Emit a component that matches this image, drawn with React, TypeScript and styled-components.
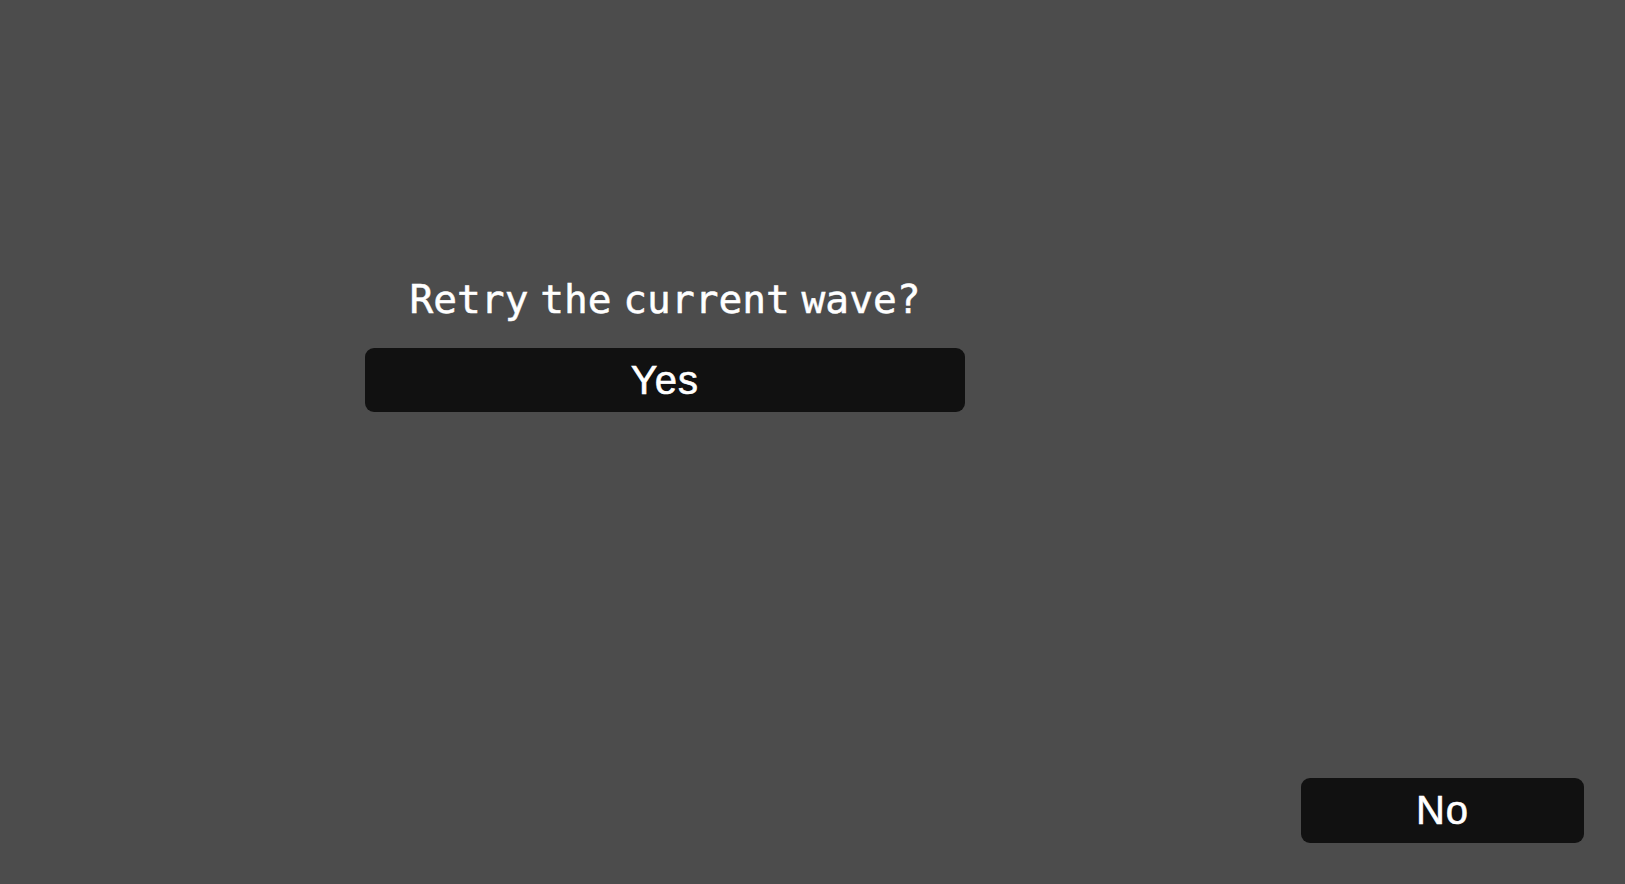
import styled, { createGlobalStyle } from "styled-components";

const GlobalStyle = createGlobalStyle`
  html, body {
    margin: 0;
    padding: 0;
    background: #4c4c4c;
  }
  * {
    box-sizing: border-box;
  }
`;

const Screen = styled.div`
  display: flex;
  flex-direction: column;
  height: 100vh;
  background: #4c4c4c;
  color: #ffffff;
  overflow: hidden;
`;

const Prompt = styled.section`
  display: flex;
  flex-direction: column;
  align-items: center;
  gap: 27px;
  width: 600px;
  margin-left: 365px;
  padding-top: 277px;
`;

const Question = styled.h1`
  margin: 0;
  font-family: "DejaVu Sans Mono", "Liberation Mono", monospace;
  font-weight: 400;
  font-size: 39.5px;
  line-height: 44px;
  word-spacing: -12px;
  white-space: nowrap;
  color: #ffffff;
  -webkit-text-stroke: 0.5px #ffffff;
`;

const Choice = styled.button<{ $width: number; $height: number }>`
  display: flex;
  align-items: center;
  justify-content: center;
  width: ${(p) => p.$width}px;
  height: ${(p) => p.$height}px;
  padding: 0;
  border: none;
  border-radius: 9px;
  background: #111111;
  color: #ffffff;
  font-family: "Liberation Sans", Arial, sans-serif;
  font-size: 40px;
  line-height: 1.117;
  letter-spacing: 1px;
  -webkit-text-stroke: 0.6px #ffffff;
  cursor: pointer;
`;

const Footer = styled.footer`
  display: flex;
  justify-content: flex-end;
  margin-top: auto;
  padding: 0 41px 41px 0;
`;

const App = () => {
  return (
    <>
      <GlobalStyle />
      <Screen>
        <Prompt>
          <Question>Retry the current wave?</Question>
          <Choice $width={600} $height={64}>
            Yes
          </Choice>
        </Prompt>
        <Footer>
          <Choice $width={283} $height={65}>
            No
          </Choice>
        </Footer>
      </Screen>
    </>
  );
};

export default App;
